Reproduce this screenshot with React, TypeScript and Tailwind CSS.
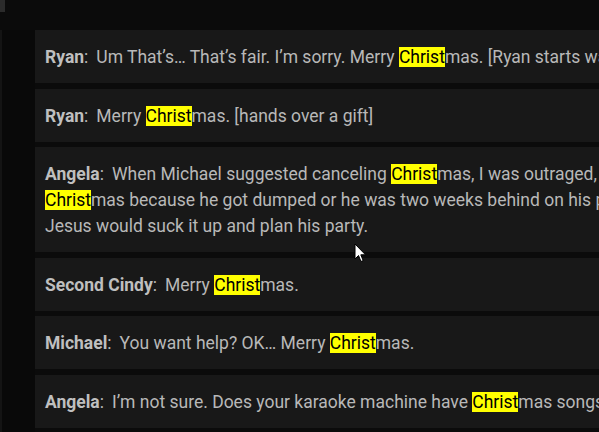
import React from 'react';

interface Line {
  speaker: string;
  parts: string[][];
}

// each inner array is one visual line; "Christ" gets highlighted
const lines: Line[] = [
  { speaker: 'Ryan', parts: [['Um That’s… That’s fair. I’m sorry. Merry ', 'Christ', 'mas. [Ryan starts walking away]']] },
  { speaker: 'Ryan', parts: [['Merry ', 'Christ', 'mas. [hands over a gift]']] },
  {
    speaker: 'Angela',
    parts: [
      ['When Michael suggested canceling ', 'Christ', 'mas, I was outraged, because did Jesus cancel'],
      ['', 'Christ', 'mas because he got dumped or he was two weeks behind on his paperwork? No.'],
      ['Jesus would suck it up and plan his party.'],
    ],
  },
  { speaker: 'Second Cindy', parts: [['Merry ', 'Christ', 'mas.']] },
  { speaker: 'Michael', parts: [['You want help? OK… Merry ', 'Christ', 'mas.']] },
  { speaker: 'Angela', parts: [['I’m not sure. Does your karaoke machine have ', 'Christ', 'mas songs?']] },
];

const Cursor = () => (
  <svg width="13" height="20" viewBox="0 0 13 20" className="absolute left-[354px] top-[243px]">
    <path d="M1 1 L1 16 L4.5 12.5 L7 18.5 L9.2 17.6 L6.8 11.8 L11.5 11.8 Z" fill="#fff" stroke="#000" strokeWidth="1" strokeLinejoin="round" />
  </svg>
);

const App: React.FC = () => {
  return (
    <div className="relative w-[599px] h-[432px] overflow-hidden bg-[#0b0b0b] font-['Roboto',sans-serif]">
      <div className="absolute left-0 top-0 w-[5px] h-[12px] bg-[#2b2b2b]" />
      <div className="flex pt-[30px] h-full">
        <div className="w-[2px] shrink-0 bg-[#141414]" />
        <div className="w-[33px] shrink-0 bg-[#090909]" />
        <div className="flex flex-col gap-[5.5px] w-[780px] shrink-0">
          {lines.map((l, i) => (
            <div key={i} className="bg-[#181818] pl-[10px] pt-[14px] pb-[13px] text-[17.5px] leading-[26px] text-[#b8b8b8] whitespace-nowrap">
              {l.parts.map((p, j) => (
                <div key={j}>
                  {j === 0 && (
                    <>
                      <span className="font-bold text-[#bfbfbf]">{l.speaker}</span>:<span className="ml-[8px]" />
                    </>
                  )}
                  {p[0]}
                  {p[1] && <span className="bg-[#ffff00] text-black">{p[1]}</span>}
                  {p[2]}
                </div>
              ))}
            </div>
          ))}
        </div>
      </div>
      <Cursor />
    </div>
  );
};

export default App;
